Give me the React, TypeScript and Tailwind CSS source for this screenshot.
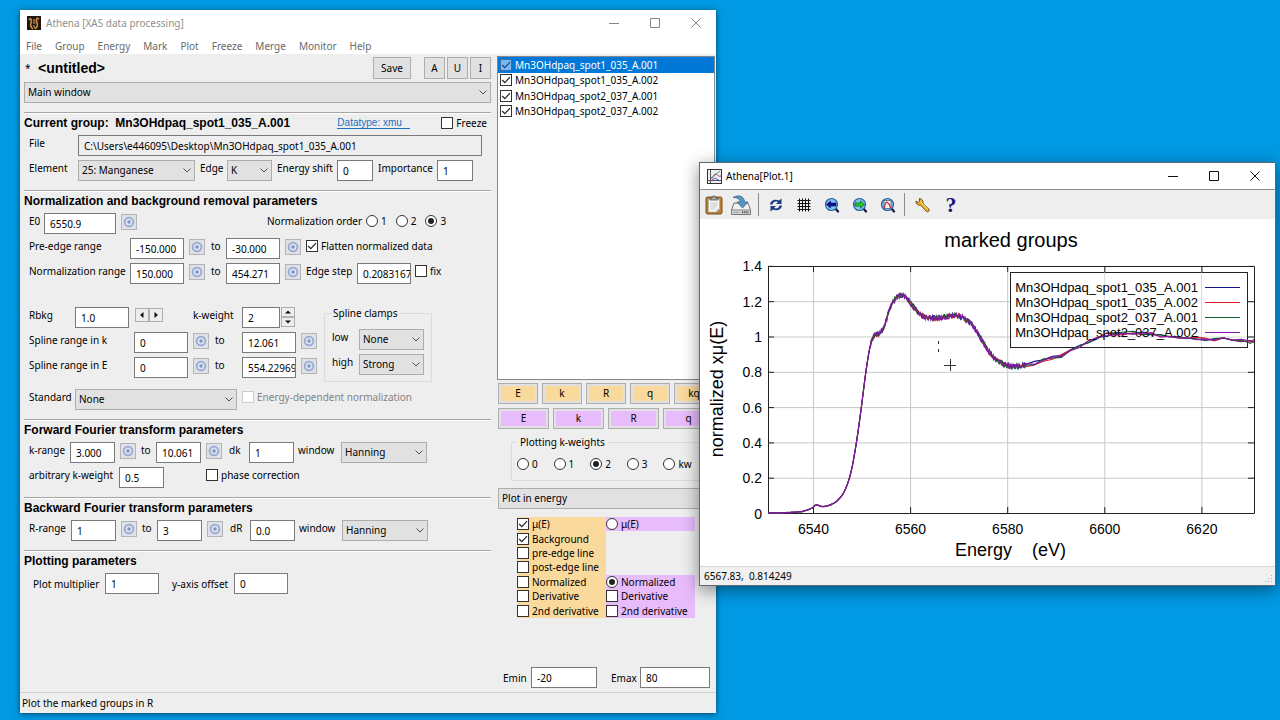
import React from "react";

/* ---------- Form primitives ---------- */

function Field({ label, value, className }: { label: string; value: string; className: string }) {
  return (
    <input
      type="text"
      aria-label={label}
      defaultValue={value}
      className={`h-[21px] shrink-0 border border-[#7a7a7a] bg-white pl-[5px] text-[10px] leading-[19px] text-black outline-none ${className}`}
    />
  );
}

function Combo({ label, options, className }: { label: string; options: string[]; className: string }) {
  return (
    <span className={`relative flex h-[21px] shrink-0 ${className}`}>
      <select
        aria-label={label}
        className="w-full appearance-none border border-[#adadad] bg-[#e1e1e1] pl-[3px] text-[10px] leading-[19px] text-black outline-none"
      >
        {options.map((o) => (
          <option key={o}>{o}</option>
        ))}
      </select>
      <svg viewBox="0 0 8 5" className="pointer-events-none absolute top-2 right-1 h-[5px] w-2" fill="none" stroke="#505050">
        <path d="M.5.5 4 4 7.5.5" />
      </svg>
    </span>
  );
}

function Tick({
  label,
  checked = false,
  disabled = false,
  selected = false,
}: {
  label: string;
  checked?: boolean;
  disabled?: boolean;
  selected?: boolean;
}) {
  return (
    <label
      className={`flex items-center gap-[3px] leading-[14px] whitespace-nowrap ${
        disabled ? "text-[#838383]" : selected ? "text-white" : "text-black"
      }`}
    >
      <span className="relative flex size-3 shrink-0">
        <input
          type="checkbox"
          defaultChecked={checked}
          disabled={disabled}
          className={`peer size-3 appearance-none border ${
            disabled ? "border-[#cccccc] bg-white" : selected ? "border-[#3a6ea5] bg-[#7ab6ef]" : "border-[#333] bg-white"
          }`}
        />
        <svg
          viewBox="0 0 12 12"
          className="pointer-events-none absolute inset-0 hidden size-3 peer-checked:block"
          fill="none"
          stroke={selected ? "#134c86" : "#222"}
          strokeWidth="1.2"
        >
          <path d="M2.2 6 4.8 8.6 10 3.2" />
        </svg>
      </span>
      {label}
    </label>
  );
}

function Radio({ name, label, checked = false }: { name: string; label: string; checked?: boolean }) {
  return (
    <label className="flex items-center gap-[3px] leading-[14px] whitespace-nowrap">
      <span className="relative flex size-3 shrink-0">
        <input
          type="radio"
          name={name}
          defaultChecked={checked}
          className="peer size-3 appearance-none rounded-full border border-[#333] bg-white"
        />
        <span className="pointer-events-none absolute inset-[3px] hidden rounded-full bg-[#222] peer-checked:block" />
      </span>
      {label}
    </label>
  );
}

function Target({ label }: { label: string }) {
  return (
    <button
      type="button"
      aria-label={label}
      className="mt-px ml-[5px] flex size-4 shrink-0 items-center justify-center border border-[#b4b4b8] bg-[#dfe1e6]"
    >
      <svg viewBox="0 0 12 12" className="size-3 shrink-0" fill="none">
        <circle cx="6" cy="6" r="4.4" stroke="#94abd6" strokeWidth="1.8" />
        <circle cx="6" cy="6" r="1.7" fill="#7c96cc" />
      </svg>
    </button>
  );
}

function Text({ children, className = "" }: { children: React.ReactNode; className?: string }) {
  return <span className={`h-[18px] shrink-0 leading-[17px] whitespace-nowrap ${className}`}>{children}</span>;
}

function Row({ children, className = "pl-[5px]" }: { children: React.ReactNode; className?: string }) {
  return <div className={`flex h-[21px] items-start ${className}`}>{children}</div>;
}

function Slot({ children, className = "" }: { children: React.ReactNode; className?: string }) {
  return <div className={`flex h-4 shrink-0 items-center whitespace-nowrap ${className}`}>{children}</div>;
}

function Section({ title, extra, children }: { title: string; extra?: React.ReactNode; children: React.ReactNode }) {
  return (
    <section className="mt-[9px] border-t border-[#a5a5a5]">
      <div className="mb-[3px] flex h-[19px] items-center border-t border-white">
        <h2 className="font-['Liberation_Sans',sans-serif] text-[12px] leading-[18px] font-bold whitespace-pre text-black">
          {title}
        </h2>
        {extra}
      </div>
      <div className="flex flex-col gap-1">{children}</div>
    </section>
  );
}

function WindowButtons({ color }: { color: string }) {
  const shapes = [
    { name: "Minimize", d: "M0 5.5H10" },
    { name: "Maximize", d: "M.5.5H9.5V9.5H.5Z" },
    { name: "Close", d: "M.5.5 9.5 9.5M9.5.5.5 9.5" },
  ];
  return (
    <div className="ml-auto flex">
      {shapes.map((s) => (
        <button key={s.name} type="button" aria-label={s.name} className="flex w-[41px] items-center justify-center">
          <svg viewBox="0 0 10 10" className="size-[10px]" fill="none" stroke={color}>
            <path d={s.d} />
          </svg>
        </button>
      ))}
    </div>
  );
}

/* ---------- Main window, left side ---------- */

const MENU = ["File", "Group", "Energy", "Mark", "Plot", "Freeze", "Merge", "Monitor", "Help"];
const GROUPS = [
  "Mn3OHdpaq_spot1_035_A.001",
  "Mn3OHdpaq_spot1_035_A.002",
  "Mn3OHdpaq_spot2_037_A.001",
  "Mn3OHdpaq_spot2_037_A.002",
];
const WINDOWS = ["Hanning", "Kaiser-Bessel", "Welch", "Parzen", "Sine"];
const CLAMPS = ["None", "Slight", "Weak", "Medium", "Strong", "Rigid"];

function ToolButton({ children, className }: { children: React.ReactNode; className: string }) {
  return (
    <button type="button" className={`h-[22px] border border-[#adadad] bg-[#e1e1e1] text-black ${className}`}>
      {children}
    </button>
  );
}

function Spin({ vertical = false, label }: { vertical?: boolean; label: string }) {
  const arrows = vertical ? ["M0 3.5 3 .5 6 3.5Z", "M0 .5 3 3.5 6 .5Z"] : ["M4.5 0 1 3 4.5 6Z", "M1.5 0 5 3 1.5 6Z"];
  return (
    <span className={vertical ? "ml-px flex w-[14px] flex-col" : "mt-px ml-[6px] flex"}>
      {arrows.map((d, i) => (
        <button
          key={d}
          type="button"
          aria-label={`${label} ${i ? "forward" : "back"}`}
          className={`flex items-center justify-center border border-[#b0b0b0] bg-[#ededed] ${
            vertical ? "h-[10px] w-[14px]" : "h-[14px] w-[14px]"
          }`}
        >
          <svg viewBox={vertical ? "0 0 6 4" : "0 0 6 6"} className={vertical ? "h-1 w-1.5" : "size-1.5"} fill="#111">
            <path d={d} />
          </svg>
        </button>
      ))}
    </span>
  );
}

function TransformRow({
  axis,
  from,
  to,
  d,
  labelClass,
}: {
  axis: string;
  from: string;
  to: string;
  d: string;
  labelClass: string;
}) {
  return (
    <Row>
      <Text className={labelClass}>{axis}-range</Text>
      <Field label={`${axis}-range minimum`} value={from} className="w-[45px]" />
      <Target label={`Pick ${axis} minimum`} />
      <Text className="ml-[5px] w-[15px]">to</Text>
      <Field label={`${axis}-range maximum`} value={to} className="w-[45px]" />
      <Target label={`Pick ${axis} maximum`} />
      <Text className="ml-[7px] w-5">d{axis}</Text>
      <Field label={`d${axis}`} value={d} className="w-[45px]" />
      <Text className="ml-1 w-[43px]">window</Text>
      <Combo label={`${axis} window`} options={WINDOWS} className="w-[86px]" />
    </Row>
  );
}

function Parameters() {
  return (
    <main className="min-w-0 flex-1">
      <div className="flex h-[22px] items-center">
        <span className="w-[14px] pl-px">*</span>
        <h1 className="font-['Liberation_Sans',sans-serif] text-[14px] font-bold text-black">&lt;untitled&gt;</h1>
        <ToolButton className="ml-auto w-[38px]">Save</ToolButton>
        <div className="ml-[13px] flex gap-[2px]">
          <ToolButton className="w-[21px]">A</ToolButton>
          <ToolButton className="w-[21px]">U</ToolButton>
          <ToolButton className="w-[21px]">I</ToolButton>
        </div>
      </div>
      <Combo label="Tool" options={["Main window", "Calibrate data", "Align data"]} className="mt-[3px] w-full" />

      <Section
        title="Current group:  Mn3OHdpaq_spot1_035_A.001"
        extra={
          <>
            <a
              href="#datatype"
              className="ml-auto w-[73px] border-b border-[#1b6fc0] font-['Liberation_Sans',sans-serif] text-[10px] leading-[10px] whitespace-nowrap text-[#1b6fc0]"
            >
              Datatype: xmu
            </a>
            <Slot className="mr-1 ml-[31px]">
              <Tick label="Freeze" />
            </Slot>
          </>
        }
      >
        <Row>
          <Text className="w-[49px]">File</Text>
          <input
            type="text"
            readOnly
            aria-label="File"
            value="C:\Users\e446095\Desktop\Mn3OHdpaq_spot1_035_A.001"
            className="h-[21px] w-[404px] border border-[#7a7a7a] bg-[#eeeeee] pl-[5px] text-black outline-none"
          />
        </Row>
        <Row>
          <Text className="w-[49px]">Element</Text>
          <Combo label="Element" options={["25: Manganese"]} className="w-[117px]" />
          <Text className="ml-[5px] w-[27px]">Edge</Text>
          <Combo label="Edge" options={["K", "L1", "L2", "L3"]} className="w-[45px]" />
          <Text className="ml-[5px] w-[60px]">Energy shift</Text>
          <Field label="Energy shift" value="0" className="w-9" />
          <Text className="ml-[5px] w-[59px]">Importance</Text>
          <Field label="Importance" value="1" className="w-9" />
        </Row>
      </Section>

      <Section title="Normalization and background removal parameters">
        <Row>
          <Text className="w-[15px]">E0</Text>
          <Field label="E0" value="6550.9" className="w-[72px]" />
          <Target label="Pick E0" />
          <Slot className="ml-auto w-[224px]">
            <span className="w-[99px]">Normalization order</span>
            <div className="flex gap-[9px]">
              <Radio name="order" label="1" />
              <Radio name="order" label="2" />
              <Radio name="order" label="3" checked />
            </div>
          </Slot>
        </Row>
        <Row>
          <Text className="w-[101px]">Pre-edge range</Text>
          <Field label="Pre-edge minimum" value="-150.000" className="w-[54px]" />
          <Target label="Pick pre-edge minimum" />
          <Text className="ml-[6px] w-[15px]">to</Text>
          <Field label="Pre-edge maximum" value="-30.000" className="w-[54px]" />
          <Target label="Pick pre-edge maximum" />
          <Slot className="ml-[5px]">
            <Tick label="Flatten normalized data" checked />
          </Slot>
        </Row>
        <Row>
          <Text className="w-[101px]">Normalization range</Text>
          <Field label="Normalization minimum" value="150.000" className="w-[54px]" />
          <Target label="Pick normalization minimum" />
          <Text className="ml-[6px] w-[15px]">to</Text>
          <Field label="Normalization maximum" value="454.271" className="w-[54px]" />
          <Target label="Pick normalization maximum" />
          <Text className="ml-[5px] w-[51px]">Edge step</Text>
          <Field label="Edge step" value="0.2083167" className="w-[54px]" />
          <Slot className="ml-1">
            <Tick label="fix" />
          </Slot>
        </Row>

        <div className="mt-[17px] flex">
          <div className="flex w-[300px] flex-col gap-1 pt-[2px]">
            <Row>
              <Text className="w-[46px]">Rbkg</Text>
              <Field label="Rbkg" value="1.0" className="w-[54px]" />
              <Spin label="Rbkg" />
              <Text className="ml-[30px] w-[49px]">k-weight</Text>
              <Field label="k-weight" value="2" className="w-[38px]" />
              <Spin vertical label="k-weight" />
            </Row>
            {[
              ["k", "12.061"],
              ["E", "554.22969"],
            ].map(([axis, max]) => (
              <Row key={axis}>
                <Text className="w-[105px]">Spline range in {axis}</Text>
                <Field label={`Spline minimum in ${axis}`} value="0" className="w-[54px]" />
                <Target label={`Pick spline minimum in ${axis}`} />
                <Text className="ml-[6px] w-[27px]">to</Text>
                <Field label={`Spline maximum in ${axis}`} value={max} className="w-[54px]" />
                <Target label={`Pick spline maximum in ${axis}`} />
              </Row>
            ))}
          </div>
          <fieldset className="h-[77px] w-[108px] border border-[#dcdcdc] pl-[7px]">
            <legend className="px-px leading-[16px]">Spline clamps</legend>
            <div className="flex flex-col gap-1 pt-2">
              <Row className="">
                <Text className="w-[27px]">low</Text>
                <Combo label="Low clamp" options={CLAMPS} className="w-[65px]" />
              </Row>
              <Row className="">
                <Text className="w-[27px]">high</Text>
                <Combo label="High clamp" options={["Strong", "Rigid", "None"]} className="w-[65px]" />
              </Row>
            </div>
          </fieldset>
        </div>

        <div className="mt-[3px]">
          <Row>
            <Text className="w-[46px]">Standard</Text>
            <Combo label="Standard" options={["None"]} className="w-[162px]" />
            <Slot className="ml-[5px]">
              <Tick label="Energy-dependent normalization" disabled />
            </Slot>
          </Row>
        </div>
      </Section>

      <Section title="Forward Fourier transform parameters">
        <TransformRow axis="k" from="3.000" to="10.061" d="1" labelClass="w-[41px]" />
        <Row>
          <Text className="w-[90px]">arbitrary k-weight</Text>
          <Field label="arbitrary k-weight" value="0.5" className="w-[45px]" />
          <Slot className="ml-[42px]">
            <Tick label="phase correction" />
          </Slot>
        </Row>
      </Section>

      <Section title="Backward Fourier transform parameters">
        <TransformRow axis="R" from="1" to="3" d="0.0" labelClass="w-[42px]" />
      </Section>

      <Section title="Plotting parameters">
        <Row className="pl-[9px]">
          <Text className="w-[72px] pt-[3px]">Plot multiplier</Text>
          <Field label="Plot multiplier" value="1" className="w-[54px]" />
          <Text className="ml-[13px] w-[62px] pt-[3px]">y-axis offset</Text>
          <Field label="y-axis offset" value="0" className="w-[54px]" />
        </Row>
      </Section>
    </main>
  );
}

/* ---------- Main window, right side ---------- */

function PlotControls() {
  return (
    <aside className="flex w-[218px] shrink-0 flex-col">
      <div className="-mt-px h-[324px] border border-[#828790] bg-white">
        <ul className="grid h-[62px] grid-rows-4">
          {GROUPS.map((g, i) => (
            <li key={g} className={`flex pl-[2px] ${i === 0 ? "bg-[#0078d7]" : ""}`}>
              <Tick label={g} checked selected={i === 0} />
            </li>
          ))}
        </ul>
      </div>
      <div className="mt-[3px] grid grid-cols-5 gap-1 px-px">
        {["E", "k", "R", "q", "kq"].map((b) => (
          <button key={b} type="button" className="h-[21px] border border-[#adadad] bg-[#e1e1e1] p-[2px] text-black">
            <span className="block bg-[#fad99c] leading-[15px]">{b}</span>
          </button>
        ))}
      </div>
      <div className="mt-1 grid grid-cols-4 gap-1 px-px">
        {["E", "k", "R", "q"].map((b) => (
          <button key={b} type="button" className="h-[21px] border border-[#adadad] bg-[#e1e1e1] p-[2px] text-black">
            <span className="block bg-[#e8bcfb] leading-[15px]">{b}</span>
          </button>
        ))}
      </div>
      <fieldset className="mx-[14px] mt-[6px] h-[46px] border border-[#dcdcdc] pl-[5px]">
        <legend className="px-[3px] leading-[15px]">Plotting k-weights</legend>
        <div className="grid h-[28px] grid-cols-5 content-center">
          {["0", "1", "2", "3", "kw"].map((w) => (
            <Radio key={w} name="kweight" label={w} checked={w === "2"} />
          ))}
        </div>
      </fieldset>
      <Combo label="Plot type" options={["Plot in energy", "Plot in k", "Plot in R"]} className="mx-px mt-[7px]" />
      <div className="mx-[20px] mt-2 grid h-[101px] grid-cols-2">
        <div className="grid grid-rows-7 bg-[#fad99c]">
          <Tick label="μ(E)" checked />
          <Tick label="Background" checked />
          <Tick label="pre-edge line" />
          <Tick label="post-edge line" />
          <Tick label="Normalized" />
          <Tick label="Derivative" />
          <Tick label="2nd derivative" />
        </div>
        <div className="grid grid-rows-7">
          <div className="flex bg-[#e8bcfb]">
            <Radio name="marked" label="μ(E)" />
          </div>
          <div className="row-span-3" />
          <div className="row-span-3 grid grid-rows-3 bg-[#e8bcfb]">
            <Radio name="marked" label="Normalized" checked />
            <Tick label="Derivative" />
            <Tick label="2nd derivative" />
          </div>
        </div>
      </div>
      <div className="mt-auto mb-1 flex pl-[6px]">
        <Text className="w-7 pt-[3px]">Emin</Text>
        <Field label="Emin" value="-20" className="w-[66px]" />
        <Text className="ml-[14px] w-[29px] pt-[3px]">Emax</Text>
        <Field label="Emax" value="80" className="w-[70px]" />
      </div>
    </aside>
  );
}

/* ---------- Plot window ---------- */

const CURVE: [number, number][] = [
  [68, 294], [90, 293.5], [104, 292], [112, 289], [116, 286], [122, 287.5], [130, 286], [138, 281], [145, 271],
  [151, 253], [156, 226], [161, 191], [166, 152], [170, 128], [174, 117], [180, 114], [185, 105], [190, 89],
  [196, 79], [201, 76.5], [206, 78.5], [212, 86], [218, 93], [225, 98], [235, 99], [245, 98], [257, 96.5],
  [265, 100], [272, 106], [280, 118], [290, 134], [300, 143], [310, 147], [320, 147], [335, 144], [350, 140],
  [365, 135], [380, 127], [395, 119], [410, 115], [430, 114], [450, 115], [470, 117.5], [500, 119.5], [530, 121],
  [554, 123],
];

function levelAt(x: number) {
  let i = 1;
  while (i < CURVE.length - 1 && CURVE[i][0] < x) i++;
  const [x1, y1] = CURVE[i - 1];
  const [x2, y2] = CURVE[i];
  const p0 = CURVE[Math.max(0, i - 2)];
  const p3 = CURVE[Math.min(CURVE.length - 1, i + 1)];
  const h = x2 - x1;
  const t = (x - x1) / h;
  const m1 = ((y2 - p0[1]) / (x2 - p0[0])) * h;
  const m2 = ((p3[1] - y1) / (p3[0] - x1)) * h;
  return (
    (2 * t ** 3 - 3 * t ** 2 + 1) * y1 +
    (t ** 3 - 2 * t ** 2 + t) * m1 +
    (-2 * t ** 3 + 3 * t ** 2) * y2 +
    (t ** 3 - t ** 2) * m2
  );
}

function trace(seed: number) {
  let s = seed * 7919 + 13;
  const random = () => {
    s = (s * 16807) % 2147483647;
    return s / 2147483647 - 0.5;
  };
  const pts: string[] = [];
  let x = 68;
  while (x <= 554) {
    const fine = x < 325;
    const amp = x < 170 ? 0.6 : fine ? 5 : 4;
    pts.push(`${x.toFixed(1)},${(levelAt(x) + random() * amp).toFixed(1)}`);
    x += fine ? 0.9 : 9;
  }
  pts.push(`554,${(122 + random() * 4).toFixed(1)}`);
  return pts.join(" ");
}

const SERIES = [
  { name: GROUPS[0], stroke: "#16168c", points: trace(1) },
  { name: GROUPS[1], stroke: "#e0202c", points: trace(2) },
  { name: GROUPS[2], stroke: "#14602a", points: trace(3) },
  { name: GROUPS[3], stroke: "#8614b0", points: trace(4) },
];
const Y_TICKS = ["0", "0.2", "0.4", "0.6", "0.8", "1", "1.2", "1.4"].map((t, i) => ({ t, y: 294.5 - i * 35.3 }));
const X_TICKS = ["6540", "6560", "6580", "6600", "6620"].map((t, i) => ({ t, x: 113.5 + i * 97.1 }));

function Chart() {
  return (
    <svg viewBox="0 0 575 347" className="block w-full bg-white font-['Liberation_Sans',sans-serif]" role="img" aria-label="marked groups">
      <text x="311" y="28" fontSize="20" textAnchor="middle">
        marked groups
      </text>
      <g stroke="#c8c8c8">
        {Y_TICKS.map(({ t, y }) => (
          <path key={t} d={`M68 ${y}H554`} />
        ))}
        {X_TICKS.map(({ t, x }) => (
          <path key={t} d={`M${x} 47V294`} />
        ))}
      </g>
      <g stroke="#222">
        {Y_TICKS.map(({ t, y }) => (
          <path key={t} d={`M68 ${y}h6M554 ${y}h-6`} />
        ))}
        {X_TICKS.map(({ t, x }) => (
          <path key={t} d={`M${x} 47v6M${x} 294v-6`} />
        ))}
        <path d="M68.5 47.5H554.5V294.5H68.5Z" fill="none" />
      </g>
      <rect x="310.5" y="53.5" width="237" height="75" fill="#fff" stroke="#222" />
      <g fontSize="14">
        {Y_TICKS.map(({ t, y }) => (
          <text key={t} x="62" y={y + 5} textAnchor="end">
            {t}
          </text>
        ))}
        {X_TICKS.map(({ t, x }) => (
          <text key={t} x={x} y="315" textAnchor="middle">
            {t}
          </text>
        ))}
      </g>
      <text x="255" y="337" fontSize="18" className="whitespace-pre">
        {"Energy    (eV)"}
      </text>
      <text transform="translate(23 170) rotate(-90)" fontSize="18" textAnchor="middle">
        normalized xμ(E)
      </text>
      <path d="M404.5 53.5V128M501.5 53.5V128M311 118H547" stroke="#dcdcdc" />
      {SERIES.map((s, i) => (
        <g key={s.name}>
          <text x="498" y={73 + i * 15} fontSize="13" textAnchor="end">
            {s.name}
          </text>
          <path d={`M505 ${68.5 + i * 15}h35`} stroke={s.stroke} />
          <polyline points={s.points} fill="none" stroke={s.stroke} strokeWidth="1.1" />
        </g>
      ))}
      <path d="M244 146.5h12M250.5 140v12M238.5 122v3M238.5 130v3" stroke="#333" />
    </svg>
  );
}

function Magnifier({ children }: { children: React.ReactNode }) {
  return (
    <svg viewBox="0 0 16 16" className="size-4">
      <path d="m11 11 3 3.5" stroke="#14143c" strokeWidth="2.2" strokeLinecap="round" />
      <circle cx="7.5" cy="7.5" r="6" fill="#7cc4ee" stroke="#2a5f9e" strokeWidth="1.2" />
      {children}
    </svg>
  );
}

const TOOLS: { name: string; icon: React.ReactNode; divider?: boolean; wide?: boolean }[] = [
  {
    name: "Copy",
    wide: true,
    icon: (
      <svg viewBox="0 0 18 20" className="h-5 w-[18px]">
        <rect x="1" y="2" width="16" height="17" rx="1.5" fill="#b87f38" stroke="#7b501b" />
        <path d="M3.5 4h11v10l-3 3h-8Z" fill="#f4f4f1" stroke="#b0aca4" strokeWidth=".6" />
        <path d="M14.5 14h-3v3Z" fill="#c4c4c0" />
        <path d="M5.5 8h7M5.5 10h7M5.5 12h6M5.5 14h4" stroke="#bcbcbc" strokeWidth=".8" />
        <path d="M5 5V3h2l1-2h2l1 2h2v2Z" fill="#a4a69f" stroke="#55574f" strokeWidth=".8" />
      </svg>
    ),
  },
  {
    name: "Export",
    wide: true,
    divider: true,
    icon: (
      <svg viewBox="0 0 20 20" className="size-5">
        <path d="M3 8h14l2.5 7v4.5H.5V15Z" fill="#d6d8d6" stroke="#777a78" />
        <path d="M3.5 9h13l2 5.5h-17Z" fill="#f2f2f0" />
        <path d="M.5 15h19" stroke="#8a8d8a" />
        <path d="M2.5 17.3h6" stroke="#999" />
        <path d="M11 17.3h7" stroke="#444" strokeWidth="2" strokeDasharray="1 .8" />
        <path d="M2 2.5C7-.5 13 .5 13.5 7H17l-5.5 6L6 7H9C9 3.5 6 2.5 2 2.5Z" fill="#5b96bf" stroke="#2f6590" strokeWidth=".8" />
      </svg>
    ),
  },
  {
    name: "Replot",
    icon: (
      <svg viewBox="0 0 14 14" className="size-[14px]" fill="#183b82">
        <path d="M1 6.5C1.5 2.5 6 .5 10 2.5L12.500.5V6H7l2-2C6.500 3 4 4 3.500 6.500Z" />
        <path d="M13 7.500c-.5 4-5 6-9 4L1.500 13.500V8H7l-2 2c2.500 1 5 0 5.500-2.500Z" />
      </svg>
    ),
  },
  {
    name: "Grid",
    icon: (
      <svg viewBox="0 0 14 14" className="size-[14px]" stroke="#111" strokeWidth="1">
        <path d="M2.500.5v13M5.500.5v13M8.500.5v13M11.500.5v13M.5 2.500h13M.5 5.500h13M.5 8.500h13M.5 11.500h13" />
      </svg>
    ),
  },
  {
    name: "Previous zoom",
    icon: (
      <Magnifier>
        <path d="M2.500 7.500 6.500 4v2H12v3H6.500v2Z" fill="#10109a" stroke="#08085c" strokeWidth=".6" />
      </Magnifier>
    ),
  },
  {
    name: "Next zoom",
    icon: (
      <Magnifier>
        <path d="M12.500 7.500 8.500 4v2H3v3h5.500v2Z" fill="#25cf25" stroke="#0b5c18" strokeWidth=".7" />
      </Magnifier>
    ),
  },
  {
    name: "Autoscale",
    divider: true,
    icon: (
      <Magnifier>
        <path d="M4 3.500h7v8H4Z" fill="#f4f6fa" stroke="#44506a" strokeWidth=".7" />
        <path d="M4.500 11C5 5 6.500 4.500 7.500 5.500S10 7 10.500 11" fill="none" stroke="#c92727" strokeWidth="1.2" />
      </Magnifier>
    ),
  },
  {
    name: "Configure",
    icon: (
      <svg viewBox="0 0 16 16" className="size-4">
        <path
          d="M4.500 1.500v3L3 5.500 1 4C.8 7 3 8.800 5.500 8L11.500 14.500c1.500 1 3.300-.5 2.500-2.200L8 6.500C8.500 4 7 1.800 4.500 1.500Z"
          fill="#ecb32c"
          stroke="#69440c"
          strokeWidth=".9"
        />
        <path d="M5.500 4.500 12.500 12" stroke="#fbe180" />
      </svg>
    ),
  },
  {
    name: "Help",
    icon: <span className="font-['Liberation_Serif',serif] text-[22px] leading-5 font-bold text-[#1c1480]">?</span>,
  },
];

function PlotWindow() {
  return (
    <section className="absolute top-[162px] right-1 left-[699px] flex flex-col border border-[#5e6a72] bg-white shadow-[0_4px_16px_rgba(0,0,0,0.45)]">
      <header className="flex h-[27px] items-stretch border-b border-[#8f8f8f]">
        <svg viewBox="0 0 15 15" className="mt-[6px] ml-[7px] size-[15px]" fill="none">
          <rect x=".5" y=".5" width="14" height="14" fill="#eef0f0" stroke="#333" />
          <path d="M3.500 1v13M1 11.500h13" stroke="#555" />
          <path d="M3 11C6 10 7 4 9 5s2 3 5 2" stroke="#c43a66" />
          <path d="M4 9 8 6l5-4" stroke="#35a37d" />
          <path d="m4 12 4-3 5 3" stroke="#4d5cd1" />
        </svg>
        <h2 className="ml-1 leading-[26px] text-black">Athena[Plot.1]</h2>
        <WindowButtons color="#111" />
      </header>
      <div className="flex h-[29px] items-center bg-[#eeeeee]">
        {TOOLS.map((t) => (
          <React.Fragment key={t.name}>
            <button
              type="button"
              aria-label={t.name}
              className={`flex h-6 items-center justify-center ${t.wide ? "w-[27px]" : "w-[28px]"}`}
            >
              {t.icon}
            </button>
            {t.divider && <span className={`h-[23px] w-px bg-[#8c8c8c] ${t.wide ? "mr-[3px] ml-1" : "mr-1 ml-[2px]"}`} />}
          </React.Fragment>
        ))}
      </div>
      <Chart />
      <footer className="flex h-[19px] items-center justify-between border-t border-[#d8d8d8] bg-[#f0f0f0] pl-1 text-black">
        <span className="whitespace-pre">6567.83,  0.814249</span>
        <svg viewBox="0 0 8 8" className="mt-1.5 mr-0.5 size-2" fill="#b0b0b0">
          <path d="M6 0h1v1H6ZM3 3h1v1H3ZM6 3h1v1H6ZM0 6h1v1H0ZM3 6h1v1H3ZM6 6h1v1H6Z" />
        </svg>
      </footer>
    </section>
  );
}

export default function App() {
  return (
    <div className="relative min-h-screen overflow-hidden bg-[#0099e3] font-['Noto_Sans','Open_Sans',sans-serif] text-[10px] text-black">
      <section className="absolute top-[10px] bottom-[7px] left-5 flex w-[696px] flex-col bg-[#eeeeee] shadow-[0_1px_6px_rgba(0,0,0,0.55)]">
        <header className="bg-white">
          <div className="flex h-[25px] items-stretch">
            <svg viewBox="0 0 14 14" className="mt-[6px] ml-[7px] size-[14px]">
              <rect width="14" height="14" fill="#20150f" />
              <path d="M2 4c2-3 3 0 2 3s0 4 2 6M12 3c-3-2-3 1-2 4s0 4-2 6" fill="none" stroke="#c98d45" strokeWidth="1.6" />
              <path d="M6 3h2.500v5H6Z" fill="#8b5a2c" />
              <path d="M6.500 9 8 12" stroke="#e4b672" />
            </svg>
            <span className="ml-[5px] leading-[26px] text-[#8f8f8f]">Athena [XAS data processing]</span>
            <WindowButtons color="#858585" />
          </div>
          <nav className="flex h-[19px] items-end gap-[13px] pl-[6px] text-[#6a6a6a]">
            {MENU.map((m) => (
              <button key={m} type="button">
                {m}
              </button>
            ))}
          </nav>
        </header>
        <div className="flex flex-1 gap-[6px] pt-[3px] pr-px pl-1">
          <Parameters />
          <PlotControls />
        </div>
        <footer className="h-[21px] border-t border-[#d4d4d4] pl-[2px] leading-[20px]">Plot the marked groups in R</footer>
      </section>
      <PlotWindow />
    </div>
  );
}
